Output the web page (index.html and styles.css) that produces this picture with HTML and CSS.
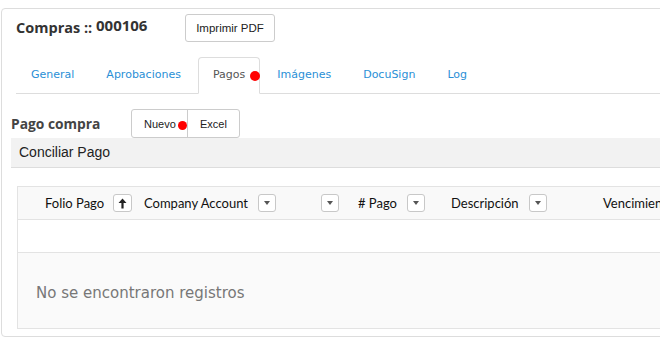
FILE: index.html
```html
<!DOCTYPE html>
<html lang="es">
<head>
<meta charset="utf-8">
<title>Compras 000106</title>
<link rel="stylesheet" href="styles.css">
</head>
<body>
<div class="panel">
  <div class="head">
    <h1 class="title">Compras :: <span class="folio">000106</span></h1>
    <button class="btn">Imprimir PDF</button>
  </div>
  <ul class="tabs">
    <li class="tab"><a>General</a></li>
    <li class="tab"><a>Aprobaciones</a></li>
    <li class="tab active"><a>Pagos</a><span class="dot tab-dot"></span></li>
    <li class="tab"><a>Imágenes</a></li>
    <li class="tab"><a>DocuSign</a></li>
    <li class="tab"><a>Log</a></li>
  </ul>
  <div class="section-head">
    <h2 class="section-title">Pago compra</h2>
    <div class="btn-group">
      <button class="gbtn nuevo">Nuevo<span class="dot btn-dot"></span></button>
      <button class="gbtn">Excel</button>
    </div>
  </div>
  <div class="bar">Conciliar Pago</div>
  <div class="grid">
    <div class="grid-head">
      <div class="hcell c1"><span>Folio Pago</span><span class="hbtn sort"><svg width="9" height="11" viewBox="0 0 9 11"><path d="M4.5 0.5 L8.5 5 L5.6 5 L5.6 10.5 L3.4 10.5 L3.4 5 L0.5 5 Z" fill="#222"/></svg></span></div>
      <div class="hcell c2"><span>Company Account</span><span class="hbtn"><i class="caret"></i></span></div>
      <div class="hcell c3"><span class="hbtn"><i class="caret"></i></span></div>
      <div class="hcell c4"><span># Pago</span><span class="hbtn"><i class="caret"></i></span></div>
      <div class="hcell c5"><span>Descripción</span><span class="hbtn"><i class="caret"></i></span></div>
      <div class="hcell c6"><span>Vencimiento</span></div>
    </div>
    <div class="grid-row"></div>
    <div class="grid-empty">No se encontraron registros</div>
  </div>
</div>
</body>
</html>
```
FILE: styles.css
```css
html, body {
  margin: 0;
  padding: 0;
  background: #fff;
  overflow: hidden;
}
body {
  font-family: "Liberation Sans", Arial, sans-serif;
  width: 660px;
  height: 357px;
}
.panel {
  margin: 8px 0 0 1px;
  width: 720px;
  border: 1px solid #ddd;
  border-radius: 4px;
  padding: 5px 0 7px 0;
}
.head {
  display: flex;
  align-items: flex-start;
  padding-left: 14px;
}
.title {
  margin: 0;
  width: 169px;
  font-family: "Open Sans", sans-serif;
  font-weight: 700;
  font-size: 14.5px;
  line-height: 23px;
  color: #333;
}
.folio {
  font-size: 15px;
  vertical-align: 2px;
  color: #333;
}
.btn {
  box-sizing: border-box;
  height: 28px;
  width: 90px;
  padding: 0;
  background: #fff;
  border: 1px solid #ccc;
  border-radius: 3px;
  font-family: "Liberation Sans", Arial, sans-serif;
  font-size: 11.5px;
  color: #222;
}
.tabs {
  list-style: none;
  margin: 15px 0 0 14px;
  padding: 0;
  display: flex;
  border-bottom: 1px solid #ddd;
  height: 36px;
}
.tab {
  position: relative;
  height: 35px;
  margin: 0 2px -1px 0;
  padding: 0 14px;
  border: 1px solid transparent;
  border-radius: 4px 4px 0 0;
  font-family: "DejaVu Sans", Verdana, sans-serif;
  font-size: 11px;
  line-height: 34px;
  color: #2a8fd6;
}
.tab.active {
  border-color: #ddd;
  border-bottom-color: #fff;
  background: #fff;
  color: #555;
}
.dot {
  position: absolute;
  width: 10px;
  height: 10px;
  border-radius: 50%;
  background: #f00;
}
.tab-dot {
  right: -1px;
  top: 13px;
}
.section-head {
  display: flex;
  align-items: center;
  margin-top: 15px;
  padding-left: 9px;
}
.section-title {
  margin: 0;
  width: 120px;
  font-family: "Open Sans", sans-serif;
  font-weight: 700;
  font-size: 13.8px;
  color: #444;
}
.btn-group {
  box-sizing: border-box;
  display: flex;
  height: 29px;
  border: 1px solid #ccc;
  border-radius: 3px;
  background: #fff;
}
.gbtn {
  position: relative;
  border: 0;
  background: transparent;
  padding: 0 12px;
  font-family: "Liberation Sans", Arial, sans-serif;
  font-size: 11px;
  color: #222;
}
.gbtn.nuevo {
  width: 56px;
  padding: 0 0 0 12px;
  text-align: left;
  border-right: 1px solid #ccc;
}
.btn-dot {
  width: 9px;
  height: 9px;
  left: 46px;
  top: 11px;
}
.bar {
  margin-left: 9px;
  height: 29px;
  background: #f2f2f2;
  border-bottom: 1px solid #ddd;
  padding-left: 8px;
  font-size: 14px;
  line-height: 29px;
  color: #222;
}
.grid {
  margin: 18px 0 0 15px;
  border: 1px solid #e3e3e3;
  border-right: 0;
}
.grid-head {
  display: flex;
  height: 32px;
  background: #f9f9f9;
  border-bottom: 1px solid #e3e3e3;
  font-family: "Lato", sans-serif;
  font-size: 13px;
  color: #111;
}
.hcell {
  display: flex;
  flex-shrink: 0;
  align-items: center;
  gap: 10px;
  box-sizing: border-box;
  white-space: nowrap;
}
.c1 { width: 120px; padding-left: 27px; gap: 9px; }
.c2 { width: 162px; padding-left: 6px; }
.c3 { width: 48px; padding-left: 21px; }
.c4 { width: 90px; padding-left: 10px; }
.c5 { width: 142px; padding-left: 13px; }
.c6 { width: 150px; padding-left: 23px; }
.hbtn {
  display: flex;
  align-items: center;
  justify-content: center;
  box-sizing: border-box;
  width: 18px;
  height: 18px;
  border: 1px solid #c8c8c8;
  border-radius: 3px;
  background: #fff;
}
.sort {
  width: 19px;
}
.caret {
  width: 0;
  height: 0;
  border-left: 3.5px solid transparent;
  border-right: 3.5px solid transparent;
  border-top: 4px solid #555;
}
.grid-row {
  height: 32px;
  border-bottom: 1px solid #e3e3e3;
}
.grid-empty {
  height: 75px;
  background: #fafafa;
  padding-left: 18px;
  font-family: "DejaVu Sans", Verdana, sans-serif;
  font-size: 15px;
  line-height: 80px;
  color: #777;
}
```
